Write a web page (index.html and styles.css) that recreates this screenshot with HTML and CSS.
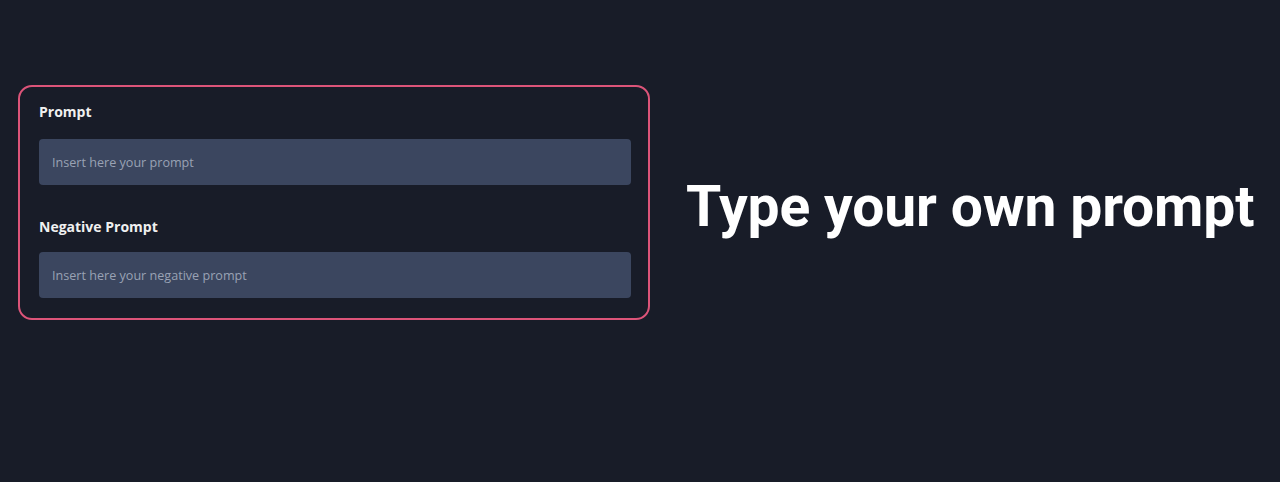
FILE: index.html
```html
<!DOCTYPE html>
<html lang="en">
<head>
  <meta charset="UTF-8" />
  <title>Prompt</title>
  <link rel="stylesheet" href="styles.css">
</head>
<body>

  <div class="row">
    <div class="card">
      <label for="prompt">Prompt</label>
      <input type="text" id="prompt" placeholder="Insert here your prompt" />

      <label for="negativo">Negative Prompt</label>
      <input type="text" id="negativo" placeholder="Insert here your negative prompt" />
    </div>

    <h1>Type your own prompt</h1>
  </div>

</body>
</html>
```

FILE: styles.css
```css
* {
  box-sizing: border-box;
}
body {
  background: #181c28;
  color: #f0f0f0;
  font-family: 'Open Sans', 'Noto Sans', sans-serif;
  margin: 0;
  padding: 85px 18px 0;
}
.row {
  display: flex;
  align-items: center;
}
.card {
  width: 632px;
  flex-shrink: 0;
  border: 2px solid #dc5479;
  border-radius: 14px;
  padding: 15px 17px 20px 19px;
}
label {
  display: block;
  font-weight: bold;
  font-size: 14px;
  line-height: 20px;
  margin-bottom: 17px;
}
input {
  display: block;
  width: 100%;
  height: 46px;
  padding: 0 13px;
  font-family: inherit;
  font-size: 12.6px;
  color: #e6e9f0;
  background: #3b465f;
  border: none;
  border-radius: 4px;
  outline: none;
}
input::placeholder {
  color: #99a2b4;
}
input + label {
  margin-top: 32px;
  margin-bottom: 15px;
}
h1 {
  margin: 0 0 0 36px;
  padding-top: 8px;
  font-family: Roboto, 'Liberation Sans', sans-serif;
  font-size: 57px;
  line-height: 1;
  letter-spacing: -0.15px;
  font-weight: bold;
  color: #fff;
  white-space: nowrap;
}
```
